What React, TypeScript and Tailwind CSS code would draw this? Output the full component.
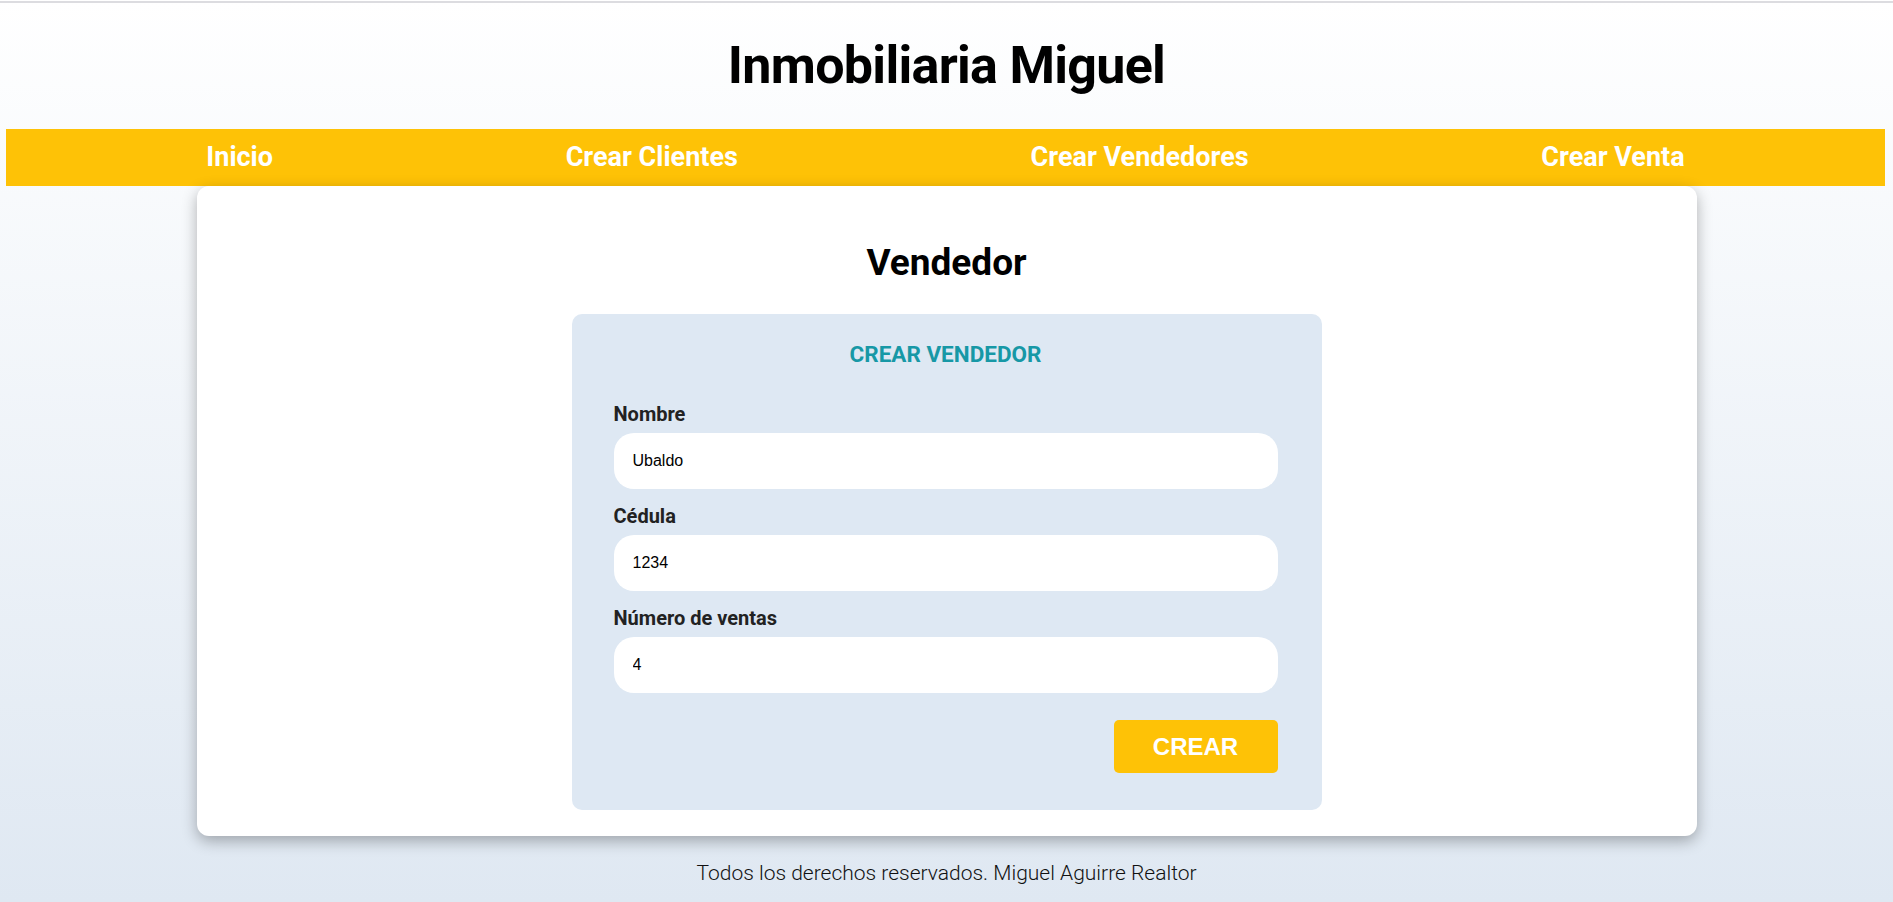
import React from "react";

const links = ["Inicio", "Crear Clientes", "Crear Vendedores", "Crear Venta"];

const fields = [
  { label: "Nombre", value: "Ubaldo" },
  { label: "Cédula", value: "1234" },
  { label: "Número de ventas", value: "4" },
];

export default function App() {
  return (
    <div className="min-h-screen bg-linear-to-b from-white to-[#dfe8f2] font-['Roboto',sans-serif]">
      <div className="h-[1px] bg-white"></div>
      <div className="h-[2px] bg-[#dcdce0]"></div>

      <header className="pt-[32px] pb-[33px] text-center">
        <h1 className="text-[52px] leading-[61px] font-bold tracking-[-0.7px] text-black">
          Inmobiliaria Miguel
        </h1>
      </header>

      <nav className="ml-[6px] mr-[8px] h-[57px] bg-[#fec206] px-[54px] flex items-center justify-around">
        {links.map((link) => (
          <a key={link} href="#" className="text-[27px] font-bold text-white leading-[57px]">
            {link}
          </a>
        ))}
      </nav>

      <main className="mx-auto w-[1500px] rounded-xl bg-white pt-[55px] pb-[26px] shadow-[0_5px_15px_rgba(0,0,0,0.3)]">
        <h2 className="text-center text-[37px] leading-[43px] font-bold text-black">Vendedor</h2>

        <form
          className="mx-auto mt-[30px] w-[750px] rounded-[10px] bg-[#dee8f3] pl-[42px] pr-[44px] pt-[28px] pb-[37px]"
          onSubmit={(e) => e.preventDefault()}
        >
          <h3 className="text-center text-[22.5px] leading-[25px] font-bold uppercase text-[#1798a6]">
            Crear Vendedor
          </h3>

          <div className="mt-[36px] flex flex-col gap-[16px]">
            {fields.map((f) => (
              <label key={f.label} className="flex flex-col gap-[7px]">
                <span className="text-[20px] leading-[23px] font-bold text-[#222]">{f.label}</span>
                <input
                  defaultValue={f.value}
                  className="h-[56px] w-full rounded-[20px] bg-white pl-[19px] font-['Liberation_Sans',Arial,sans-serif] text-[16px] text-black outline-none"
                />
              </label>
            ))}
          </div>

          <div className="mt-[27px] flex justify-end">
            <button
              type="submit"
              className="h-[53px] w-[164px] rounded-[5px] bg-[#fec206] font-['Liberation_Sans',Arial,sans-serif] text-[24px] font-bold text-white"
            >
              CREAR
            </button>
          </div>
        </form>
      </main>

      <footer className="pt-[25px] pb-[14px] text-center text-[21px] leading-[24px] font-light text-[#111]">
        Todos los derechos reservados. Miguel Aguirre Realtor
      </footer>
    </div>
  );
}
